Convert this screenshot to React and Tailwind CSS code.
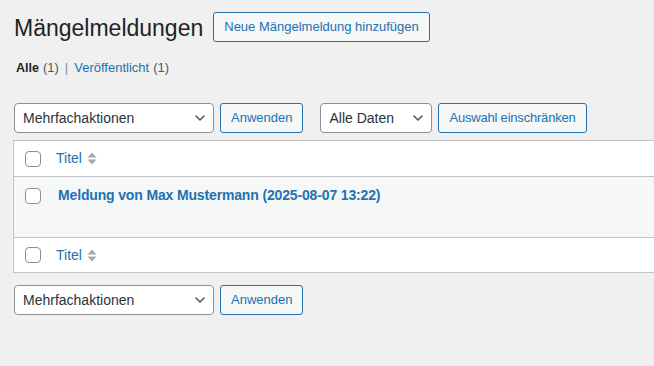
const Chevron = () => (
  <svg width="10" height="6" viewBox="0 0 10 6" fill="none" className="shrink-0">
    <path d="M1 1l4 4 4-4" stroke="#50575e" strokeWidth="1.6" strokeLinecap="round" strokeLinejoin="round" />
  </svg>
);

const SortArrows = () => (
  <svg width="10" height="13" viewBox="0 0 10 13" className="shrink-0">
    <path d="M0.5 5.5L5 0.5l4.5 5z" fill="#a7aaad" />
    <path d="M0.5 7.5L5 12.5l4.5-5z" fill="#a7aaad" />
  </svg>
);

const Select = ({ label, width }) => (
  <div
    className={`${width} h-[30px] flex items-center justify-between pl-[8px] pr-[8px] bg-white border border-[#8c8f94] rounded-[4px] text-[14px] text-[#2c3338]`}
  >
    <span>{label}</span>
    <Chevron />
  </div>
);

const Button = ({ children }) => (
  <div className="h-[30px] flex items-center px-[10px] bg-[#f6f7f7] border border-[#2271b1] rounded-[3px] text-[13px] text-[#2271b1] whitespace-nowrap">
    {children}
  </div>
);

const Checkbox = () => (
  <div className="w-[16px] h-[16px] shrink-0 bg-white border border-[#8c8f94] rounded-[4px]" />
);

const HeadRow = ({ height, border }) => (
  <div className={`${height} ${border} flex items-center pl-[11px] bg-white`}>
    <Checkbox />
    <div className="ml-[15px] flex items-center gap-[5px]">
      <span className="text-[14px] text-[#2271b1]">Titel</span>
      <SortArrows />
    </div>
  </div>
);

export default function App() {
  return (
    <div className="w-[654px] h-[366px] overflow-hidden bg-[#f0f0f1] font-['Liberation_Sans',Arial,sans-serif] text-[13px] text-[#3c434a]">
      <div className="pl-[14px] pt-[12px]">
        <div className="flex items-start gap-[10px]">
          <h1 className="mt-[1px] text-[23px] leading-[30px] text-[#1d2327]">Mängelmeldungen</h1>
          <Button>Neue Mängelmeldung hinzufügen</Button>
        </div>

        <div className="mt-[15px] h-[20px] flex items-center pl-[2px] text-[13px]">
          <span className="font-bold text-[12.5px] text-[#1d2327]">Alle</span>
          <span className="ml-[4px] text-[#50575e]">(1)</span>
          <span className="mx-[6px] text-[#8c8f94]">|</span>
          <span className="text-[#2271b1]">Veröffentlicht</span>
          <span className="ml-[4px] text-[#50575e]">(1)</span>
        </div>

        <div className="mt-[25px] flex items-center">
          <div className="flex items-center gap-[6px]">
            <Select label="Mehrfachaktionen" width="w-[200px]" />
            <Button>Anwenden</Button>
          </div>
          <div className="ml-[17px] flex items-center gap-[6px]">
            <Select label="Alle Daten" width="w-[112px]" />
            <Button>
              <span className="tracking-[-0.2px]">Auswahl einschränken</span>
            </Button>
          </div>
        </div>

        <div className="mt-[7px] -ml-px w-[700px] border border-[#c3c4c7] bg-white">
          <HeadRow height="h-[36px]" border="border-b border-[#c3c4c7]" />
          <div className="h-[60px] flex items-start pl-[11px] bg-[#f6f7f7]">
            <div className="pt-[11px]">
              <Checkbox />
            </div>
            <div className="ml-[17px] pt-[8px] text-[14px] leading-[20px] font-bold tracking-[-0.15px] text-[#2271b1]">
              Meldung von Max Mustermann (2025-08-07 13:22)
            </div>
          </div>
          <HeadRow height="h-[35px]" border="border-t border-[#c3c4c7]" />
        </div>

        <div className="mt-[12px] flex items-center gap-[6px]">
          <Select label="Mehrfachaktionen" width="w-[200px]" />
          <Button>Anwenden</Button>
        </div>
      </div>
    </div>
  );
}
